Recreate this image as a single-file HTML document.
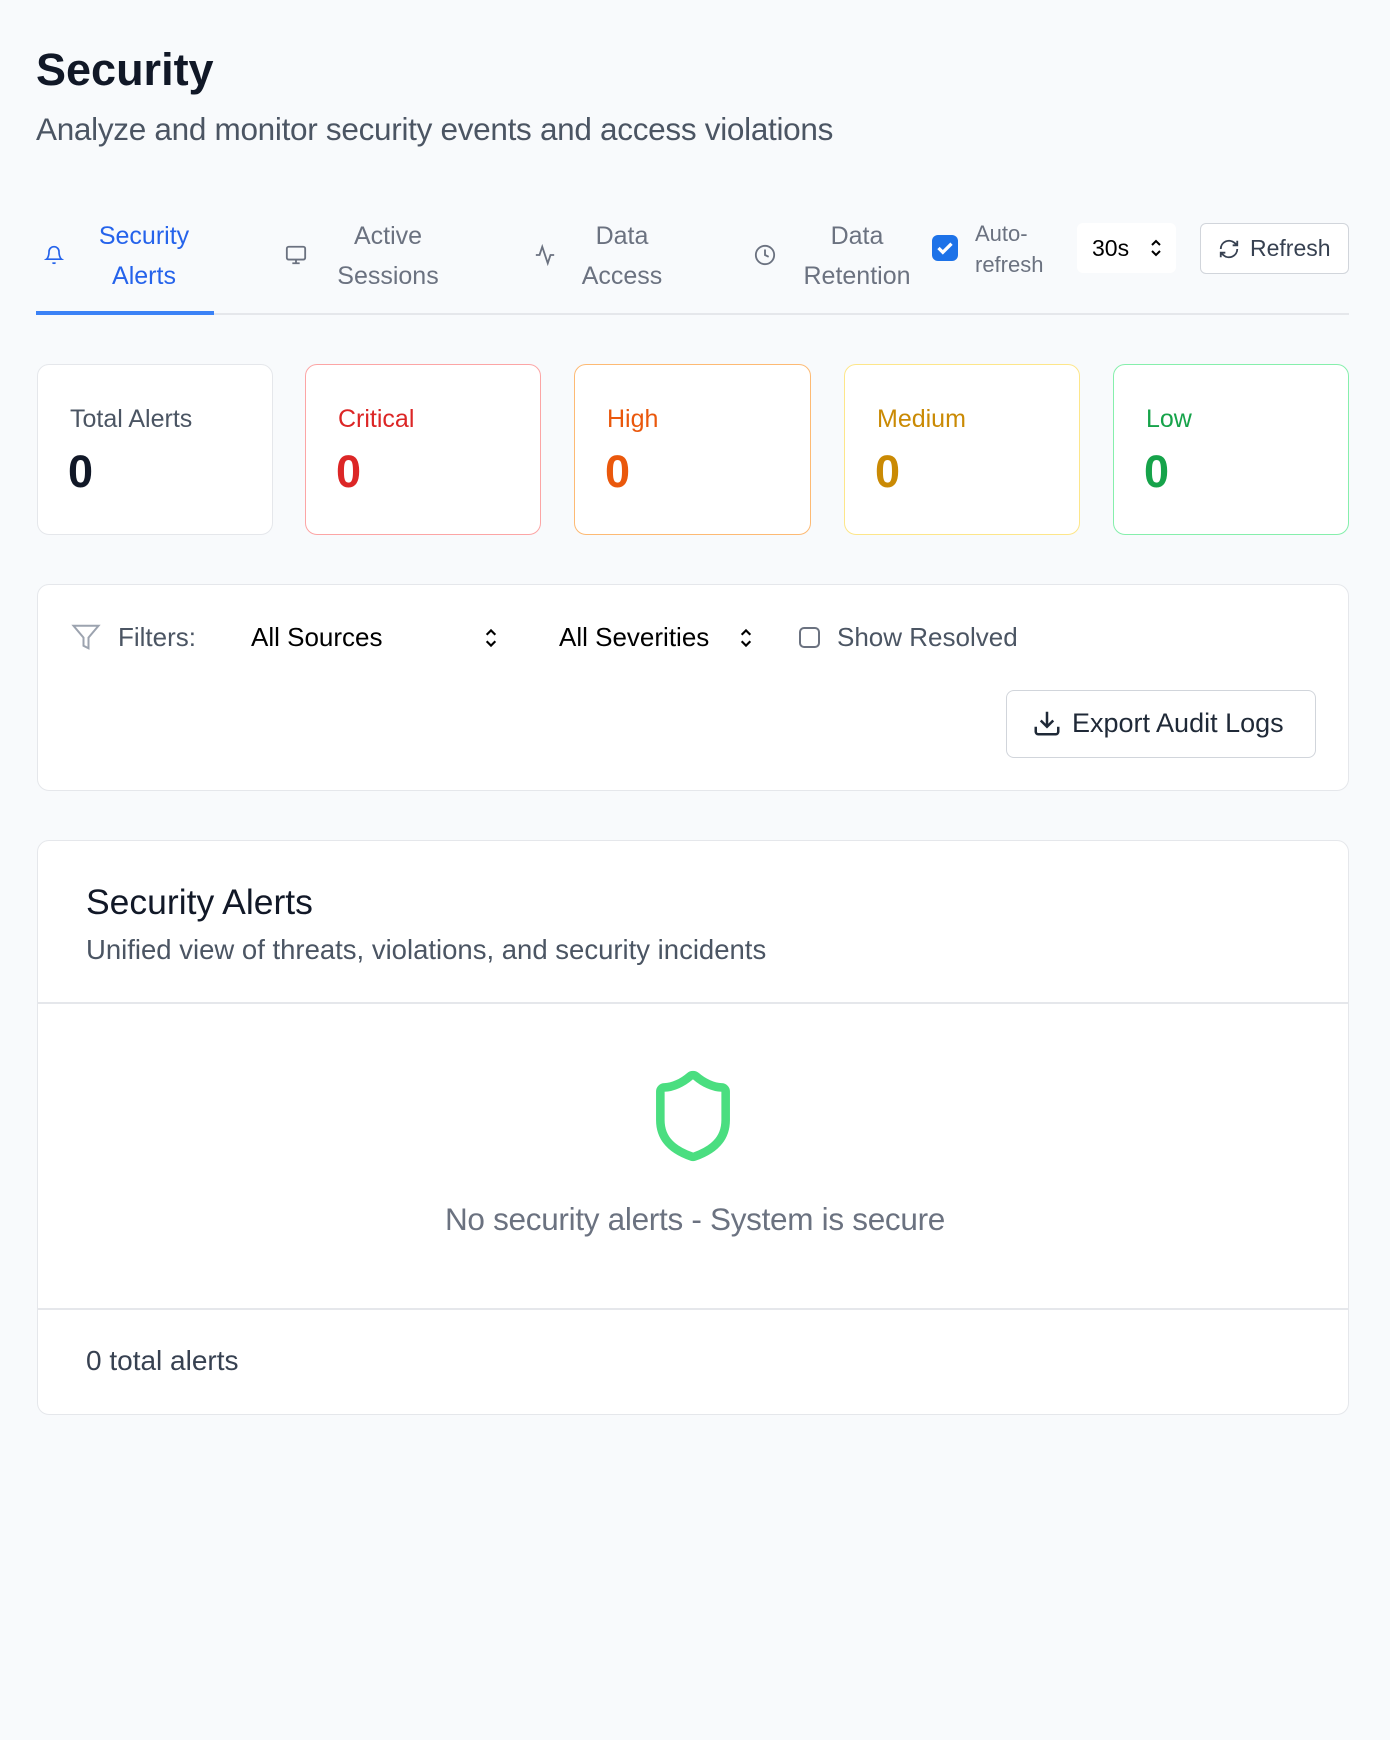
<!DOCTYPE html>
<html><head><meta charset="utf-8"><style>
*{box-sizing:border-box;margin:0;padding:0}
body{width:1390px;height:1740px;background:#f8fafc;font-family:"Liberation Sans",sans-serif;color:#111827;position:relative;overflow:hidden}
.a{position:absolute;white-space:nowrap}
.card{position:absolute;background:#fff;border:1.5px solid #e5e7eb;border-radius:12px}
.lbl{position:absolute;left:32px;top:40px;font-size:25px}
.num{position:absolute;left:30px;top:81px;font-size:45px;font-weight:bold}
.tab{position:absolute;font-size:25px;color:#6b7280;text-align:center;line-height:40px}
</style></head><body>
<div class="a" style="left:36px;top:44px;font-size:45px;font-weight:bold;color:#111827">Security</div>
<div class="a" style="left:36px;top:111px;font-size:31.5px;color:#4b5563;letter-spacing:-0.3px">Analyze and monitor security events and access violations</div>

<svg class="a" style="left:44px;top:244px" width="20" height="22" viewBox="0 0 24 24" fill="none" stroke="#2563eb" stroke-width="2"><path d="M6 8a6 6 0 0 1 12 0c0 7 3 9 3 9H3s3-2 3-9"/><path d="M10.3 21a1.94 1.94 0 0 0 3.4 0"/></svg>
<div class="tab" style="left:84px;top:216px;width:120px;color:#2563eb">Security<br>Alerts</div>
<svg class="a" style="left:285px;top:244px" width="22" height="22" viewBox="0 0 24 24" fill="none" stroke="#6b7280" stroke-width="2"><rect x="2" y="3" width="20" height="14" rx="2"/><path d="M8 21h8M12 17v4"/></svg>
<div class="tab" style="left:323px;top:216px;width:130px">Active<br>Sessions</div>
<svg class="a" style="left:534px;top:244px" width="22" height="22" viewBox="0 0 24 24" fill="none" stroke="#6b7280" stroke-width="2"><path d="M22 12h-4l-3 9L9 3l-3 9H2"/></svg>
<div class="tab" style="left:572px;top:216px;width:100px">Data<br>Access</div>
<svg class="a" style="left:754px;top:244px" width="22" height="22" viewBox="0 0 24 24" fill="none" stroke="#6b7280" stroke-width="2"><circle cx="12" cy="12" r="10"/><path d="M12 6v6l4 2"/></svg>
<div class="tab" style="left:792px;top:216px;width:130px">Data<br>Retention</div>
<div class="a" style="left:932px;top:235px;width:26px;height:26px;border-radius:6px;background:#1d72e8"><svg width="26" height="26" viewBox="0 0 24 24" fill="none" stroke="#fff" stroke-width="3"><path d="M6 12l4 4 8-8"/></svg></div>
<div class="tab" style="left:975px;top:218px;width:80px;font-size:22px;line-height:31px;text-align:left">Auto-<br>refresh</div>
<div class="a" style="left:1077px;top:223px;width:99px;height:50px;background:#fff;border-radius:6px;font-size:23px;line-height:50px;padding-left:15px;color:#000">30s</div>
<svg class="a" style="left:1148px;top:236px" width="16" height="24" viewBox="0 0 16 24" fill="none" stroke="#000" stroke-width="2"><path d="M4 9l4-4 4 4M4 15l4 4 4-4"/></svg>
<div class="a" style="left:1200px;top:223px;width:149px;height:51px;background:#fff;border:1.5px solid #d1d5db;border-radius:6px;font-size:23px;line-height:48px;padding-left:49px;color:#374151">Refresh</div>
<svg class="a" style="left:1218px;top:238px" width="22" height="22" viewBox="0 0 24 24" fill="none" stroke="#374151" stroke-width="2"><path d="M3 12a9 9 0 0 1 15-6.7L21 8M21 3v5h-5M21 12a9 9 0 0 1-15 6.7L3 16M3 21v-5h5"/></svg>
<div class="a" style="left:36px;top:313px;width:1313px;height:2px;background:#e5e7eb"></div>
<div class="a" style="left:36px;top:311px;width:178px;height:4px;background:#3b82f6"></div>

<div class="card" style="left:37px;top:364px;width:236px;height:171px"><div class="lbl" style="color:#4b5563">Total Alerts</div><div class="num" style="color:#111827">0</div></div>
<div class="card" style="left:305px;top:364px;width:236px;height:171px;border-color:#fca5a5"><div class="lbl" style="color:#dc2626">Critical</div><div class="num" style="color:#dc2626">0</div></div>
<div class="card" style="left:574px;top:364px;width:237px;height:171px;border-color:#fdba74"><div class="lbl" style="color:#ea580c">High</div><div class="num" style="color:#ea580c">0</div></div>
<div class="card" style="left:844px;top:364px;width:236px;height:171px;border-color:#fde68a"><div class="lbl" style="color:#ca8a04">Medium</div><div class="num" style="color:#ca8a04">0</div></div>
<div class="card" style="left:1113px;top:364px;width:236px;height:171px;border-color:#86efac"><div class="lbl" style="color:#16a34a">Low</div><div class="num" style="color:#16a34a">0</div></div>

<div class="card" style="left:37px;top:584px;width:1312px;height:207px"></div>
<svg class="a" style="left:71px;top:622px" width="30" height="30" viewBox="0 0 24 24" fill="none" stroke="#9ca3af" stroke-width="1.6"><path d="M22 3H2l8 9.5V19l4 2v-8.5z"/></svg>
<div class="a" style="left:118px;top:622px;font-size:26px;color:#4b5563">Filters:</div>
<div class="a" style="left:251px;top:622px;font-size:26px;color:#000">All Sources</div>
<svg class="a" style="left:482px;top:625px" width="18" height="26" viewBox="0 0 16 24" fill="none" stroke="#000" stroke-width="2"><path d="M4 9l4-4 4 4M4 15l4 4 4-4"/></svg>
<div class="a" style="left:559px;top:622px;font-size:26px;color:#000">All Severities</div>
<svg class="a" style="left:737px;top:625px" width="18" height="26" viewBox="0 0 16 24" fill="none" stroke="#000" stroke-width="2"><path d="M4 9l4-4 4 4M4 15l4 4 4-4"/></svg>
<div class="a" style="left:799px;top:627px;width:21px;height:21px;border:2px solid #6b7280;border-radius:5px"></div>
<div class="a" style="left:837px;top:622px;font-size:26px;color:#4b5563">Show Resolved</div>
<div class="a" style="left:1006px;top:690px;width:310px;height:68px;background:#fff;border:1.5px solid #d1d5db;border-radius:8px;font-size:27px;line-height:65px;padding-left:65px;color:#1f2937">Export Audit Logs</div>
<svg class="a" style="left:1032px;top:708px" width="30" height="30" viewBox="0 0 24 24" fill="none" stroke="#1f2937" stroke-width="2"><path d="M21 15v4a2 2 0 0 1-2 2H5a2 2 0 0 1-2-2v-4M7 10l5 5 5-5M12 15V3"/></svg>

<div class="card" style="left:37px;top:840px;width:1312px;height:575px"></div>
<div class="a" style="left:86px;top:882px;font-size:35.5px;color:#111827">Security Alerts</div>
<div class="a" style="left:86px;top:934px;font-size:27.5px;color:#4b5563">Unified view of threats, violations, and security incidents</div>
<div class="a" style="left:38px;top:1002px;width:1310px;height:2px;background:#e5e7eb"></div>
<svg class="a" style="left:644px;top:1067px" width="98" height="98" viewBox="0 0 24 24" fill="none" stroke="#4ade80" stroke-width="2.1" stroke-linecap="round" stroke-linejoin="round"><path d="M20 13c0 5-3.5 7.5-7.66 8.95a1 1 0 0 1-.67-.01C7.5 20.5 4 18 4 13V6a1 1 0 0 1 1-1c2 0 4.5-1.2 6.24-2.72a1.17 1.17 0 0 1 1.52 0C14.51 3.81 17 5 19 5a1 1 0 0 1 1 1z"/></svg>
<div class="a" style="left:0;width:1390px;text-align:center;top:1201px;font-size:31.5px;color:#6b7280;letter-spacing:-0.3px">No security alerts - System is secure</div>
<div class="a" style="left:38px;top:1308px;width:1310px;height:2px;background:#e5e7eb"></div>
<div class="a" style="left:86px;top:1345px;font-size:28px;color:#374151">0 total alerts</div>
</body></html>
